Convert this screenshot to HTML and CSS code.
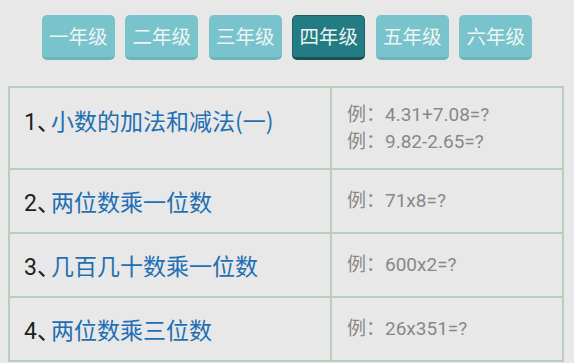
FILE: index.html
```html
<!DOCTYPE html>
<html lang="zh">
<head>
<meta charset="utf-8">
<link rel="stylesheet" href="styles.css">
</head>
<body>
<div class="grades">
  <span class="grade">一年级</span>
  <span class="grade">二年级</span>
  <span class="grade">三年级</span>
  <span class="grade active">四年级</span>
  <span class="grade">五年级</span>
  <span class="grade">六年级</span>
</div>
<table class="list">
  <colgroup><col class="c1"><col class="c2"></colgroup>
  <tr class="first">
    <td class="title top"><span class="num">1</span><span class="dun">、</span><a class="link">小数的加法和减法(一)</a></td>
    <td class="ex">例：4.31+7.08=?<br>例：9.82-2.65=?</td>
  </tr>
  <tr>
    <td class="title"><span class="num">2</span><span class="dun">、</span><a class="link">两位数乘一位数</a></td>
    <td class="ex">例：71x8=?</td>
  </tr>
  <tr>
    <td class="title"><span class="num">3</span><span class="dun">、</span><a class="link">几百几十数乘一位数</a></td>
    <td class="ex">例：600x2=?</td>
  </tr>
  <tr>
    <td class="title"><span class="num">4</span><span class="dun">、</span><a class="link">两位数乘三位数</a></td>
    <td class="ex">例：26x351=?</td>
  </tr>
</table>
</body>
</html>
```
FILE: styles.css
```css
html, body {
  margin: 0;
  padding: 0;
  background: #e8e8e8;
  font-family: "Noto Sans CJK SC", "Noto Sans", Roboto, sans-serif;
  overflow: hidden;
}
.grades {
  display: flex;
  justify-content: center;
  gap: 10.5px;
  padding-top: 15px;
  height: 45px;
}
.grade {
  box-sizing: border-box;
  width: 73px;
  height: 45px;
  background: #79c4cc;
  border-bottom: 3px solid #6db3ba;
  border-radius: 5px;
  color: #eef5f5;
  font-size: 19.5px;
  line-height: 42px;
  text-align: center;
}
.grade.active {
  background: #237b83;
  border: 1px solid #1b5e64;
  border-bottom: 3px solid #1a4f54;
  line-height: 40px;
}
.list {
  margin: 26px 0 0 8px;
  width: 554px;
  table-layout: fixed;
  border-collapse: collapse;
}
.c1 { width: 322px; }
.c2 { width: 232px; }
.list td {
  border: 2px solid #bacdba;
  padding: 17px 14px;
  vertical-align: middle;
}
.title {
  font-size: 23px;
  line-height: 28px;
  color: #1e1e1e;
  white-space: nowrap;
}
.num {
  font-family: Roboto, "Noto Sans CJK SC", sans-serif;
  line-height: 0;
}
.dun {
  letter-spacing: -9px;
  line-height: 0;
}
.link {
  color: #1f6fb3;
}
.ex {
  font-family: Roboto, "Noto Sans CJK JP", sans-serif;
  font-size: 19px;
  line-height: 28px;
  color: #888888;
}
.list td.ex {
  padding-left: 15px;
}
.list .first td.ex {
  line-height: 27px;
  padding-top: 13px;
  padding-bottom: 13px;
}
.list .first td.title.top {
  vertical-align: top;
  padding-top: 18px;
}
```
